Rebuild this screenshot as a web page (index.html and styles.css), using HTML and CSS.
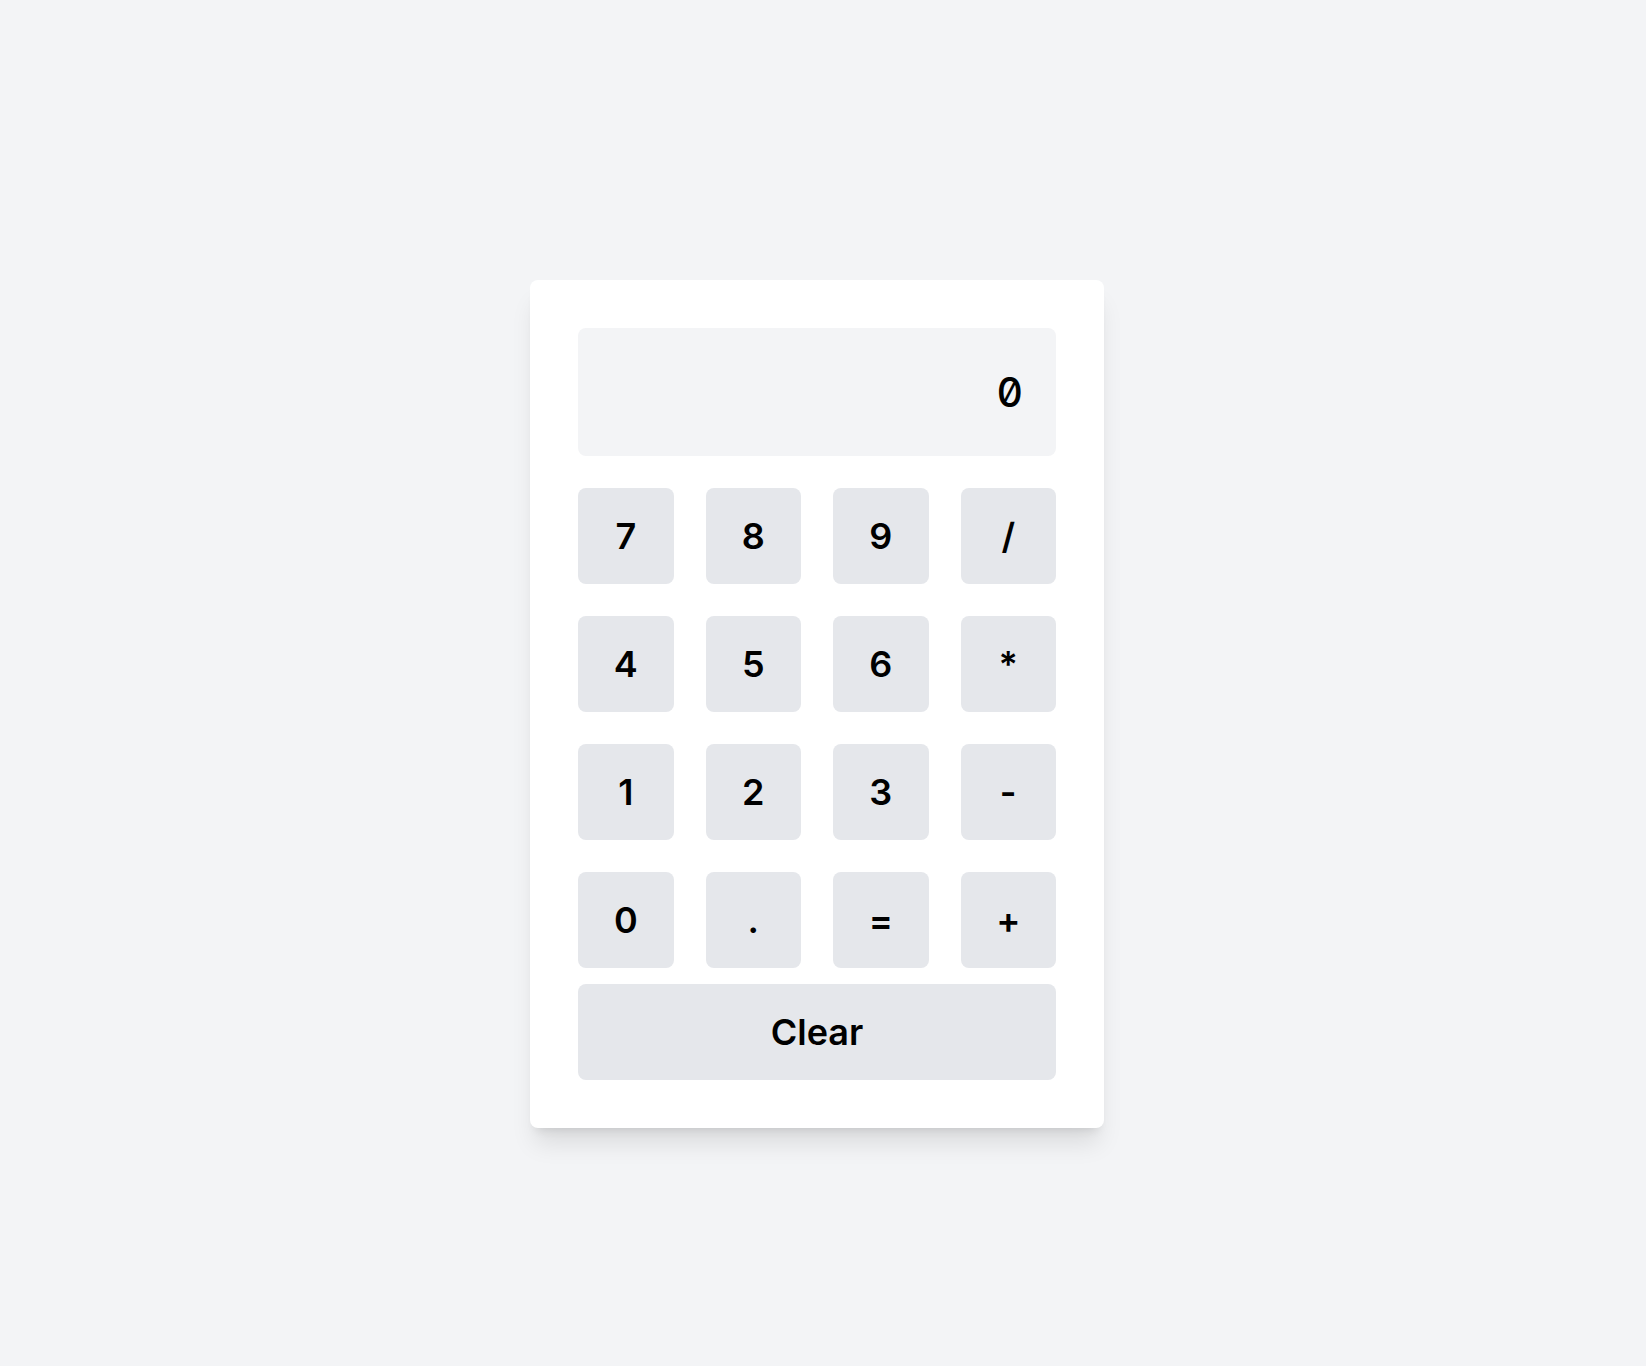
FILE: index.html
```html
<!DOCTYPE html>
<html lang="en">
<head>
<meta charset="utf-8">
<title>Calculator</title>
<link rel="stylesheet" href="styles.css">
</head>
<body>
<main class="page">
  <div class="calculator">
    <div class="display">0</div>
    <div class="keys">
      <button class="key">7</button>
      <button class="key">8</button>
      <button class="key">9</button>
      <button class="key">/</button>
      <button class="key">4</button>
      <button class="key">5</button>
      <button class="key">6</button>
      <button class="key">*</button>
      <button class="key">1</button>
      <button class="key">2</button>
      <button class="key">3</button>
      <button class="key">-</button>
      <button class="key">0</button>
      <button class="key">.</button>
      <button class="key">=</button>
      <button class="key">+</button>
    </div>
    <button class="key clear">Clear</button>
  </div>
</main>
</body>
</html>
```
FILE: styles.css
```css
* { box-sizing: border-box; }
html, body {
  margin: 0;
  background: #f3f4f6;
  font-family: Inter, "Noto Sans", sans-serif;
}
.page {
  min-height: 1366px;
  padding: 280px 0 0 530px;
}
.calculator {
  width: 574px;
  background: #ffffff;
  border-radius: 8px;
  padding: 48px;
  box-shadow: 0 20px 25px -5px rgba(0,0,0,0.1), 0 8px 10px -6px rgba(0,0,0,0.1);
}
.display {
  height: 128px;
  background: #f3f4f6;
  border-radius: 8px;
  padding: 0 33px 0 0;
  display: flex;
  align-items: center;
  justify-content: flex-end;
  font-family: Inter, "DejaVu Sans Mono", monospace;
  font-feature-settings: "zero" 1, "tnum" 1;
  font-variant-numeric: slashed-zero tabular-nums;
  font-size: 41px;
  font-weight: 500;
  color: #000;
  margin-bottom: 32px;
}
.keys {
  display: grid;
  grid-template-columns: repeat(4, 1fr);
  grid-auto-rows: 96px;
  gap: 32px;
}
.key {
  border: none;
  background: #e5e7eb;
  border-radius: 8px;
  font-family: Inter, "Noto Sans", sans-serif;
  font-size: 36px;
  font-weight: 600;
  color: #000;
  display: flex;
  align-items: center;
  justify-content: center;
  padding: 0;
}
.clear {
  width: 100%;
  height: 96px;
  margin-top: 16px;
}
```
